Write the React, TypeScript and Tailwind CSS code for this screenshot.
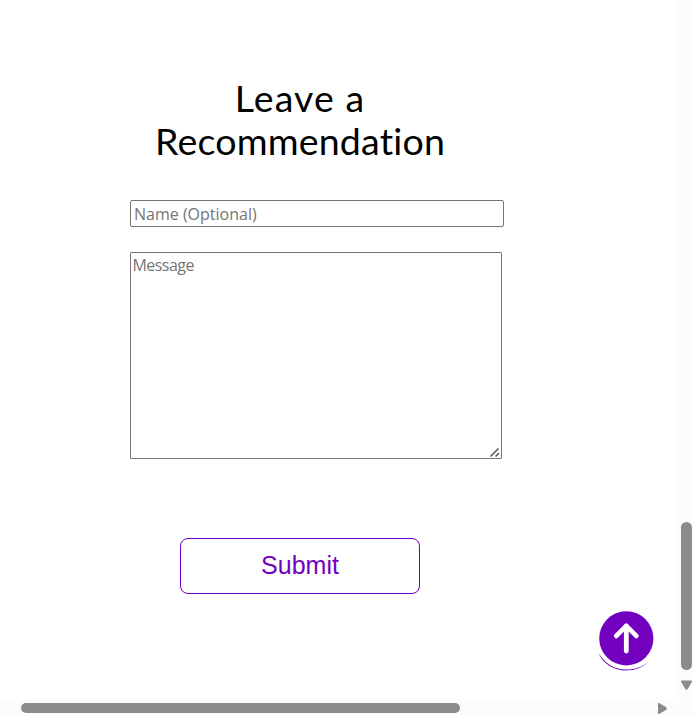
export default function App() {
  return (
    <div className="grid h-[715px] w-[694px] grid-cols-[677px_17px] grid-rows-[699px_16px] overflow-hidden bg-white font-['Open_Sans',sans-serif]">
      <main className="relative flex flex-col items-start pl-[130px] pt-[76px]">
        <h1 className="w-[340px] text-center font-['Lato','Open_Sans',sans-serif] text-[37.5px] leading-[43px] text-black">
          <span className="block tracking-[1.1px]">Leave a</span>
          <span className="block whitespace-nowrap tracking-[0.2px]">Recommendation</span>
        </h1>
        <input
          aria-label="Name"
          placeholder="Name (Optional)"
          className="mt-[38px] h-[27px] w-[374px] rounded-[2px] border border-[#767676] bg-white px-[3px] text-[16px] outline-none placeholder:text-[#757575]"
        />
        <div className="relative mt-[25px] h-[207px] w-[372px]">
          <textarea
            aria-label="Message"
            placeholder="Message"
            className="block h-full w-full resize-none rounded-[1px] border border-[#767676] bg-white px-[1.5px] py-[2px] text-[16px] leading-[20px] tracking-[-0.55px] outline-none placeholder:text-[#757575]"
          />
          <svg className="absolute bottom-[2px] right-[2px]" width="10" height="9" viewBox="0 0 10 9" stroke="#555" strokeWidth="1.5">
            <path d="M.5 8.5 8.5.5M5.5 8.5l3.5-3.5" />
          </svg>
        </div>
        <button className="ml-[50px] mt-[79px] h-[56px] w-[240px] rounded-[8px] border border-[#7300bf] bg-white pb-[2px] font-['Liberation_Sans',Arial,sans-serif] text-[25px] leading-[52px] text-[#7300bf]">
          Submit
        </button>
        <button aria-label="Back to top" className="absolute left-[597px] top-[609px] h-[64px] w-[60px]">
          <svg width="60" height="64" viewBox="0 0 60 64" fill="none">
            <path d="M1.5 44C6 55 17 61.5 29 61.5c9 0 17-3 22.5-9C46 57.8 38 60.6 29 60.6 18 60.6 8 55 1.5 44Z" fill="#7300bf" />
            <circle cx="29.3" cy="29.3" r="27.1" fill="#7300bf" />
            <path d="M29.3 42V17M19.3 26.9l10-10 10 10" stroke="white" strokeWidth="4.8" strokeLinecap="round" strokeLinejoin="round" />
          </svg>
        </button>
      </main>
      <aside className="flex flex-col items-center bg-[#fcfcfc] pl-[2px] pt-[522px]">
        <div className="h-[148px] w-[11px] rounded-full bg-[#8b8b8b]" />
        <svg className="mt-[10px]" width="13" height="11" viewBox="0 0 13 11">
          <path d="M1.2 1h10.6L7.5 8.7q-1 1.2-2 0Z" fill="#8b8b8b" stroke="#8b8b8b" strokeLinejoin="round" />
        </svg>
      </aside>
      <footer className="col-span-2 flex items-start bg-[#fcfcfc] pl-[21px] pt-[4px]">
        <div className="h-[10px] w-[439px] rounded-full bg-[#8b8b8b]" />
        <svg className="ml-[197px] mt-[-1px]" width="11" height="13" viewBox="0 0 11 13">
          <path d="M1.5 1.2v10.6l7.5-4.3q1.2-1 0-2Z" fill="#8b8b8b" stroke="#8b8b8b" strokeLinejoin="round" />
        </svg>
      </footer>
    </div>
  );
}
